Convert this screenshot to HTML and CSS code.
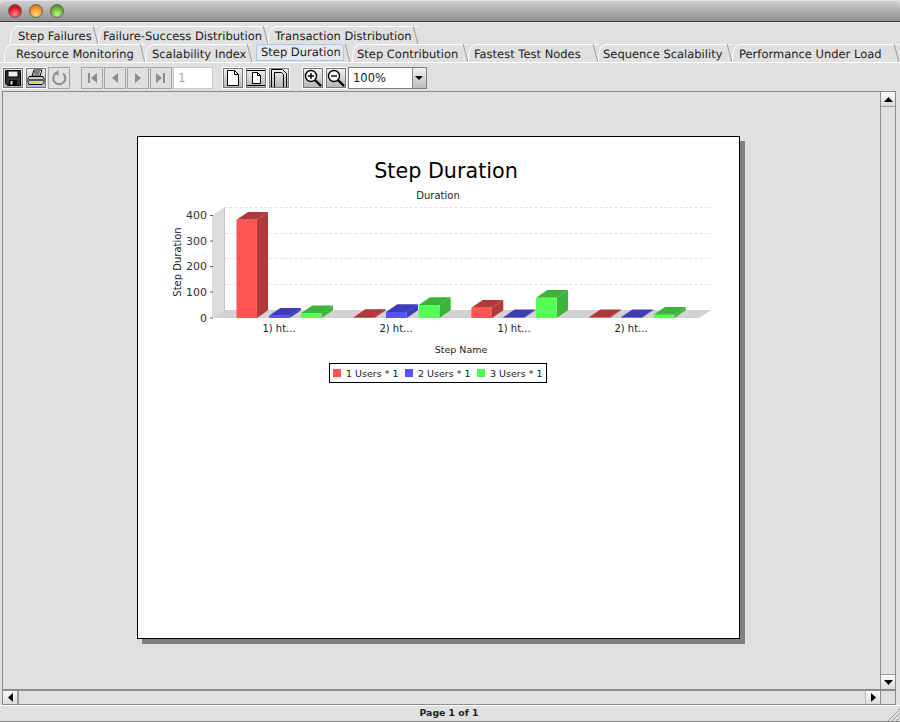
FILE: index.html
```html
<!DOCTYPE html>
<html lang="en">
<head>
<meta charset="utf-8">
<title>Step Duration</title>
<link rel="stylesheet" href="styles.css">
</head>
<body>
<div class="window">
  <header class="titlebar">
    <span class="light light-red"></span>
    <span class="light light-yellow"></span>
    <span class="light light-green"></span>
  </header>

  <nav class="tabs">
    <div class="tab-row tab-row-back">
      <span class="tab t-failures">Step Failures</span>
      <span class="tab t-success">Failure-Success Distribution</span>
      <span class="tab t-trans">Transaction Distribution</span>
    </div>
    <div class="tab-row tab-row-front">
      <span class="tab t-resource">Resource Monitoring</span>
      <span class="tab t-scal">Scalability Index</span>
      <span class="tab tab-active t-dur">Step Duration</span>
      <span class="tab t-contrib">Step Contribution</span>
      <span class="tab t-fast">Fastest Test Nodes</span>
      <span class="tab t-seq">Sequence Scalability</span>
      <span class="tab t-perf">Performance Under Load</span>
    </div>
  </nav>

  <div class="toolbar">
    <div class="tool-group">
      <button class="tbtn"><svg width="20" height="20" viewBox="0 0 20 20"><path class="ic" d="M2.500 2.500h15v15h-13l-2-2z"/><rect x="5" y="3" width="10" height="6" fill="#eee" stroke="#000"/><rect x="6" y="12" width="8" height="5.500" fill="#000"/><rect x="7.500" y="13" width="2" height="3.500" fill="#ddd"/></svg></button>
      <button class="tbtn"><svg width="20" height="20" viewBox="0 0 20 20"><path d="M6 8l2-6h8l-2 6z" fill="#fff" stroke="#000"/><path d="M8 4h6M7.500 6h6" stroke="#000"/><path d="M3 8.500h14l1 2v4l-2 2H3l-1-2v-4z" fill="#ccc" stroke="#000"/><rect x="3" y="11" width="14" height="2" fill="#555"/><rect x="5" y="14" width="6" height="1.400" fill="#e8d000"/></svg></button>
      <button class="tbtn tbtn-off"><svg width="20" height="20" viewBox="0 0 20 20"><path d="M7 5.200a6 6 0 1 0 7 .3" fill="none" stroke="#8c8c8c" stroke-width="2"/><path d="M9.500 2v6l-4-3z" fill="#8c8c8c"/></svg></button>
    </div>
    <div class="tool-group group-nav">
      <button class="tbtn tbtn-off"><svg width="20" height="20" viewBox="0 0 20 20"><path d="M6 5h2v10H6zM15 5v10l-6-5z" fill="#8c8c8c"/></svg></button>
      <button class="tbtn tbtn-off"><svg width="20" height="20" viewBox="0 0 20 20"><path d="M13 5v10l-6-5z" fill="#8c8c8c"/></svg></button>
      <button class="tbtn tbtn-off"><svg width="20" height="20" viewBox="0 0 20 20"><path d="M7 5v10l6-5z" fill="#8c8c8c"/></svg></button>
      <button class="tbtn tbtn-off"><svg width="20" height="20" viewBox="0 0 20 20"><path d="M12 5h2v10h-2zM5 5v10l6-5z" fill="#8c8c8c"/></svg></button>
      <span class="page-field">1</span>
    </div>
    <div class="tool-group group-page">
      <button class="tbtn"><svg width="20" height="20" viewBox="0 0 20 20"><path d="M4.500 2.500h7l4 4v11h-11z" fill="#fff" stroke="#000"/><path d="M11.500 2.500v4h4" fill="none" stroke="#000"/></svg></button>
      <button class="tbtn"><svg width="20" height="20" viewBox="0 0 20 20"><path d="M1 2.500h18M1 17.500h18" stroke="#000"/><path d="M6.500 4.500h5l3 3v8h-8z" fill="#fff" stroke="#000"/><path d="M11.500 4.500v3h3" fill="none" stroke="#000"/></svg></button>
      <button class="tbtn"><svg width="20" height="20" viewBox="0 0 20 20"><path d="M2.500 19V1.500h11l4 4V19M5.500 19V4.500h7l2 2V19" fill="none" stroke="#000"/></svg></button>
    </div>
    <div class="tool-group group-zoom">
      <button class="tbtn"><svg width="20" height="20" viewBox="0 0 20 20"><circle cx="8" cy="8" r="5.500" fill="#fff" stroke="#000" stroke-width="1.400"/><path d="M5 8h6M8 5v6" stroke="#000" stroke-width="1.400"/><path d="M12 12l6 6" stroke="#000" stroke-width="2.400"/></svg></button>
      <button class="tbtn"><svg width="20" height="20" viewBox="0 0 20 20"><circle cx="8" cy="8" r="5.500" fill="#fff" stroke="#000" stroke-width="1.400"/><path d="M5 8h6" stroke="#000" stroke-width="1.400"/><path d="M12 12l6 6" stroke="#000" stroke-width="2.400"/></svg></button>
      <div class="combo"><span class="combo-value">100%</span><span class="combo-arrow"></span></div>
    </div>
  </div>

  <main class="frame">
    <div class="frame-top">
      <div class="viewport">
        <div class="paper">
          <svg class="chart" width="601" height="501" viewBox="138 137 601 501">
            <text class="c-title" x="446" y="178" text-anchor="middle">Step Duration</text>
            <text class="c-label" x="438" y="199" text-anchor="middle">Duration</text>

            <polygon class="wall" points="212,215.500 224.500,207.500 224.500,310.500 212,318"/>
            <polygon class="floor" points="212,318 224.500,310 711,310 699,318"/>
            <path class="wall-edge" d="M224.500 207.500V310.500"/>
            <path class="grid" d="M224.500 207.500H711M224.500 233.500H711M224.500 258.500H711M224.500 284.500H711M212 241L224.500 233.500M212 266.500L224.500 258.500M212 292L224.500 284.500"/>
            <path class="tick" d="M210 215.500H213M210 241H213M210 266.500H213M210 292H213M210 318H213"/>
            <text class="c-num" x="207" y="219" text-anchor="end">400</text>
            <text class="c-num" x="207" y="245" text-anchor="end">300</text>
            <text class="c-num" x="207" y="270" text-anchor="end">200</text>
            <text class="c-num" x="207" y="296" text-anchor="end">100</text>
            <text class="c-num" x="207" y="322" text-anchor="end">0</text>
            <text class="c-label" transform="translate(180.500 262) rotate(-90)" text-anchor="middle">Step Duration</text>

            <g class="s-red">
              <polygon class="top" points="236.500,219.700 248,212 268,212 257,219.700"/><polygon class="side" points="257,219.700 268,212 268,310.300 257,318"/><rect class="front" x="236.500" y="219.700" width="20.500" height="98.300"/>
              <polygon class="top" points="354,317 365.300,309.300 386,309.300 374.700,317"/><polygon class="side" points="374.700,317 386,309.300 386,310.300 374.700,318"/><rect class="front" x="354" y="317" width="20.700" height="1"/>
              <polygon class="top" points="471.300,307.700 482.600,300 503.300,300 492,307.700"/><polygon class="side" points="492,307.700 503.300,300 503.300,310.300 492,318"/><rect class="front" x="471.300" y="307.700" width="20.700" height="10.300"/>
              <polygon class="top" points="589,317.300 600.300,309.600 621,309.600 609.700,317.300"/><polygon class="side" points="609.700,317.300 621,309.600 621,310.300 609.700,318"/><rect class="front" x="589" y="317.300" width="20.700" height=".7"/>
            </g>
            <g class="s-blue">
              <polygon class="top" points="269,315.700 280.300,308 301,308 289.700,315.700"/><polygon class="side" points="289.700,315.700 301,308 301,310.300 289.700,318"/><rect class="front" x="269" y="315.700" width="20.700" height="2.300"/>
              <polygon class="top" points="386,312 397.300,304.300 418,304.300 406.700,312"/><polygon class="side" points="406.700,312 418,304.300 418,310.300 406.700,318"/><rect class="front" x="386" y="312" width="20.700" height="6"/>
              <polygon class="top" points="503.300,317.300 514.600,309.600 535.300,309.600 524,317.300"/><polygon class="side" points="524,317.300 535.300,309.600 535.300,310.300 524,318"/><rect class="front" x="503.300" y="317.300" width="20.700" height=".7"/>
              <polygon class="top" points="621,317.300 632.300,309.600 653,309.600 641.700,317.300"/><polygon class="side" points="641.700,317.300 653,309.600 653,310.300 641.700,318"/><rect class="front" x="621" y="317.300" width="20.700" height=".7"/>
            </g>
            <g class="s-green">
              <polygon class="top" points="301,313.300 312.300,305.600 333,305.600 321.700,313.300"/><polygon class="side" points="321.700,313.300 333,305.600 333,310.300 321.700,318"/><rect class="front" x="301" y="313.300" width="20.700" height="4.700"/>
              <polygon class="top" points="418.700,305 430,297.300 450.700,297.300 439.400,305"/><polygon class="side" points="439.400,305 450.700,297.300 450.700,310.300 439.400,318"/><rect class="front" x="418.700" y="305" width="20.700" height="13"/>
              <polygon class="top" points="536,297.700 547.300,290 568,290 556.700,297.700"/><polygon class="side" points="556.700,297.700 568,290 568,310.300 556.700,318"/><rect class="front" x="536" y="297.700" width="20.700" height="20.300"/>
              <polygon class="top" points="653.700,314.700 665,307 685.700,307 674.400,314.700"/><polygon class="side" points="674.400,314.700 685.700,307 685.700,310.300 674.400,318"/><rect class="front" x="653.700" y="314.700" width="20.700" height="3.300"/>
            </g>

            <text class="c-label" x="279" y="332" text-anchor="middle">1) ht...</text>
            <text class="c-label" x="396" y="332" text-anchor="middle">2) ht...</text>
            <text class="c-label" x="514" y="332" text-anchor="middle">1) ht...</text>
            <text class="c-label" x="631" y="332" text-anchor="middle">2) ht...</text>
            <text class="c-label c-small" x="461" y="353" text-anchor="middle">Step Name</text>

            <rect class="legend" x="329.500" y="363.500" width="217" height="19"/>
            <rect class="swatch-red" x="333" y="369" width="8" height="8"/>
            <text class="c-label c-small" x="346" y="377">1 Users * 1</text>
            <rect class="swatch-blue" x="405" y="369" width="8" height="8"/>
            <text class="c-label c-small" x="418" y="377">2 Users * 1</text>
            <rect class="swatch-green" x="477" y="369" width="8" height="8"/>
            <text class="c-label c-small" x="490" y="377">3 Users * 1</text>
          </svg>
        </div>
      </div>
      <div class="vscroll">
        <span class="sbtn sbtn-v"><svg width="9" height="5" viewBox="0 0 9 5"><path d="M4.500 0L9 5H0z"/></svg></span>
        <span class="vtrough"></span>
        <span class="sbtn sbtn-v sbtn-down"><svg width="9" height="5" viewBox="0 0 9 5"><path d="M0 0h9L4.500 5z"/></svg></span>
      </div>
    </div>
    <div class="hscroll">
      <span class="sbtn sbtn-h"><svg width="5" height="9" viewBox="0 0 5 9"><path d="M5 0v9L0 4.500z"/></svg></span>
      <span class="htrough"></span>
      <span class="sbtn sbtn-h sbtn-right"><svg width="5" height="9" viewBox="0 0 5 9"><path d="M0 0v9l5-4.500z"/></svg></span>
      <span class="corner"></span>
    </div>
  </main>

  <footer class="status">
    <span>Page 1 of 1</span>
    <svg class="grip" width="12" height="12" viewBox="0 0 12 12"><path d="M0 12L12 0M4 12L12 4M8 12L12 8" stroke="#999" fill="none"/></svg>
  </footer>
</div>
</body>
</html>
```
FILE: styles.css
```css
* { box-sizing: border-box; }
html, body { margin: 0; padding: 0; }
body { width: 900px; height: 722px; overflow: hidden; background: #e0e0e0; font-family: "DejaVu Sans", sans-serif; color: #111; }
.window { width: 900px; height: 722px; display: flex; flex-direction: column; background: #e0e0e0; }

.titlebar { height: 22px; flex: none; display: flex; align-items: center; gap: 8px; padding: 0 0 0 8px; background: linear-gradient(#cfcfcf, #8f8f8f); border-top: 1px solid #e4e4e4; border-bottom: 1px solid #444; border-radius: 5px 5px 0 0; }
.light { width: 14px; height: 14px; border-radius: 50%; border: 1px solid #666; margin-right: -1px; }
.light-red { background: radial-gradient(circle at 50% 75%, #ff8f8f, #e01020 60%, #a01018); }
.light-yellow { background: radial-gradient(circle at 50% 75%, #ffe080, #f09020 60%, #b86010); }
.light-green { background: radial-gradient(circle at 50% 75%, #c8f090, #60b030 60%, #3c8020); }

.tabs { flex: none; padding-top: 4px; }
.tab-row { height: 18px; display: flex; }
.tab-row-back { padding-left: 10px; }
.tab-row-front { padding-left: 4px; border-bottom: 1px solid #fff; height: 19px; }
.tab { position: relative; height: 18px; font-size: 11.5px; text-rendering: geometricPrecision; line-height: 18px; white-space: nowrap; color: #1c1c1c; border-top: 1px solid #fff; border-left: 1px solid transparent; border-top-left-radius: 8px 14px; padding-left: 8px; }
.tab::before { content: ""; position: absolute; left: -1px; top: 0; bottom: 0; width: 6px; border-left: 1px solid #fff; border-top-left-radius: 6px 14px; }
.tab::after { content: ""; position: absolute; right: 2px; top: -1px; height: 18px; width: 1px; background: #a0a0a0; transform: skewX(14deg); }
.t-failures { width: 88px; padding-left: 7px; }
.t-success { width: 170px; padding-left: 4px; }
.t-trans { width: 150px; padding-left: 6px; }
.t-resource { width: 141px; padding-left: 11px; }
.t-scal { width: 107px; padding-left: 6px; }
.t-dur { width: 92px; margin-left: 4px; padding-left: 4px; }
.t-contrib { width: 116px; margin-left: 2px; padding-left: 4px; }
.t-fast { width: 130px; padding-left: 5px; }
.t-seq { width: 134px; padding-left: 4px; }
.t-perf { width: 167px; padding-left: 6px; }
.tab-active { width: 88px; margin-right: 6px; border: 1px solid #a8c8e8; border-radius: 3px 3px 0 0; background: #e6e8ee; line-height: 15px; height: 17px; }
.tab-active::before { display: none; }
.tab-active::after { right: -5px; }

.toolbar { height: 28px; flex: none; display: flex; align-items: flex-start; padding: 4px 0 0 2px; }
.tool-group { display: flex; gap: 1px; }
.group-nav { margin-left: 11px; }
.group-page { margin-left: 9px; }
.group-zoom { margin-left: 12px; }
.tbtn { width: 22px; height: 22px; padding: 0; display: flex; align-items: center; justify-content: center; background: linear-gradient(#f2f2f2, #b4b4b4); border: 1px solid #fff; outline: 1px solid #777; outline-offset: -2px; }
.tbtn-off { background: #e0e0e0; border: 1px solid #a6a6a6; outline: none; }
.tbtn .ic { fill: #333; stroke: #000; }
.page-field { width: 40px; height: 22px; background: #fff; border: 1px solid #c8c8c8; color: #a8a8a8; font-size: 12px; line-height: 20px; padding-left: 4px; }
.combo { width: 79px; height: 22px; display: flex; border: 1px solid #808080; background: #fff; }
.combo-value { flex: 1; font-size: 11.5px; line-height: 20px; padding-left: 4px; color: #222; }
.combo-arrow { width: 14px; background: linear-gradient(#f2f2f2, #bcbcbc); border-left: 1px solid #888; position: relative; }
.combo-arrow::after { content: ""; position: absolute; left: 2px; top: 8px; border-left: 4px solid transparent; border-right: 4px solid transparent; border-top: 4px solid #000; }

.frame { height: 614px; flex: none; margin-left: 2px; margin-right: 4px; border-top: 1px solid #888; border-left: 1px solid #888; display: flex; flex-direction: column; }
.frame-top { flex: 1; min-height: 0; display: flex; }
.viewport { flex: 1; min-width: 0; padding: 44px 0 0 134px; }
.paper { width: 603px; height: 503px; background: #fff; border: 1px solid #000; box-shadow: 5px 5px 0 #808080; }
.chart { display: block; }
.c-title { font: 20.7px "DejaVu Sans", sans-serif; fill: #000; }
.c-label, .c-num { font: 10px "DejaVu Sans", sans-serif; fill: #222; }
.c-small { font-size: 9.5px; }
.c-num { font-size: 11px; fill: #333; }
.wall { fill: #dcdcdc; }
.floor { fill: #d2d2d2; }
.wall-edge { stroke: #c4c4c4; fill: none; }
.grid { stroke: #e2e2e2; stroke-dasharray: 3 2; fill: none; }
.tick { stroke: #666; fill: none; }
.s-red .front { fill: #ff5555; }
.s-red .top, .s-red .side { fill: #b03a3a; }
.s-blue .front { fill: #5555ff; }
.s-blue .top, .s-blue .side { fill: #3c3cb4; }
.s-green .front { fill: #55ff55; }
.s-green .top, .s-green .side { fill: #3cb43c; }
.legend { fill: #fff; stroke: #000; }
.swatch-red { fill: #ff5555; }
.swatch-blue { fill: #5555ff; }
.swatch-green { fill: #55ff55; }

.vscroll { width: 16px; flex: none; display: flex; flex-direction: column; border-left: 1px solid #8c8c8c; border-right: 1px solid #8c8c8c; }
.vtrough { flex: 1; }
.sbtn { flex: none; display: flex; align-items: center; justify-content: center; background: linear-gradient(#fafafa, #dcdcdc); }
.sbtn-v { height: 15px; border-bottom: 1px solid #9a9a9a; }
.sbtn-down { border-top: 1px solid #9a9a9a; border-bottom: none; }
.hscroll { height: 16px; flex: none; display: flex; border-top: 2px solid #8c8c8c; border-bottom: 1px solid #8c8c8c; }
.sbtn-h { width: 16px; border-right: 2px solid #9a9a9a; }
.sbtn-right { width: 15px; border-left: 1px solid #bbb; border-right: none; }
.htrough { flex: 1; }
.corner { width: 16px; flex: none; border-left: 1px solid #8c8c8c; border-right: 1px solid #8c8c8c; margin-bottom: -1px; }

.status { flex: 1; position: relative; border-top: 1px solid #fff; border-bottom: 1px solid #8c8c8c; text-align: center; font-size: 9.3px; font-weight: 700; line-height: 13px; color: #222; padding-right: 2px; }
.grip { position: absolute; right: 0; bottom: 0; }
```
